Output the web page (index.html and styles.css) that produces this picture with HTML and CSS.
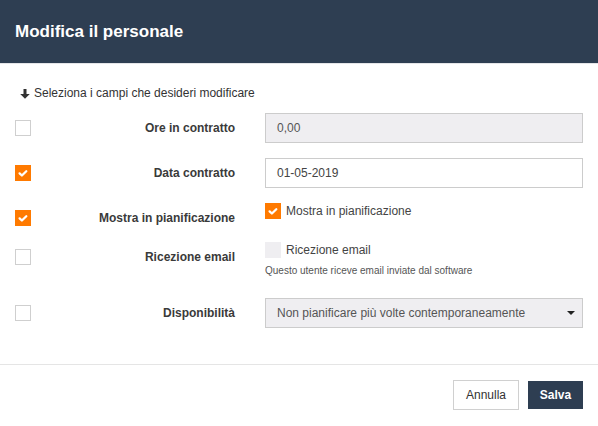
FILE: index.html
```html
<!DOCTYPE html>
<html lang="it">
<head>
<meta charset="utf-8">
<title>Modifica il personale</title>
<link rel="stylesheet" href="styles.css">
</head>
<body>
<div class="modal">
  <header class="modal-header">
    <h1 class="modal-title">Modifica il personale</h1>
  </header>
  <main class="modal-body">
    <p class="hint">
      <svg class="hint-arrow" viewBox="0 0 10 10" width="10" height="10"><path d="M3.5 0h3v5h3.3L5 9.8 0.2 5h3.3z" fill="#333"/></svg>
      <span>Seleziona i campi che desideri modificare</span>
    </p>

    <div class="row row-1">
      <div class="cell-check"><span class="cb"></span></div>
      <div class="cell-label">Ore in contratto</div>
      <div class="cell-field"><div class="input input-disabled">0,00</div></div>
    </div>

    <div class="row row-2">
      <div class="cell-check"><span class="cb cb-on"><svg viewBox="0 0 16 16" width="16" height="16"><path d="M4.6 8.4l2.3 2.1L11.3 6.2" fill="none" stroke="#fff" stroke-width="2.3" stroke-linecap="round" stroke-linejoin="round"/></svg></span></div>
      <div class="cell-label">Data contratto</div>
      <div class="cell-field"><div class="input">01-05-2019</div></div>
    </div>

    <div class="row row-3">
      <div class="cell-check"><span class="cb cb-on"><svg viewBox="0 0 16 16" width="16" height="16"><path d="M4.6 8.4l2.3 2.1L11.3 6.2" fill="none" stroke="#fff" stroke-width="2.3" stroke-linecap="round" stroke-linejoin="round"/></svg></span></div>
      <div class="cell-label">Mostra in pianificazione</div>
      <div class="cell-field">
        <div class="check-line"><span class="cb cb-on"><svg viewBox="0 0 16 16" width="16" height="16"><path d="M4.6 8.4l2.3 2.1L11.3 6.2" fill="none" stroke="#fff" stroke-width="2.3" stroke-linecap="round" stroke-linejoin="round"/></svg></span><span class="check-text">Mostra in pianificazione</span></div>
      </div>
    </div>

    <div class="row row-4">
      <div class="cell-check"><span class="cb"></span></div>
      <div class="cell-label">Ricezione email</div>
      <div class="cell-field">
        <div class="check-line"><span class="cb cb-disabled"></span><span class="check-text">Ricezione email</span></div>
        <div class="help">Questo utente riceve email inviate dal software</div>
      </div>
    </div>

    <div class="row row-5">
      <div class="cell-check"><span class="cb"></span></div>
      <div class="cell-label">Disponibilità</div>
      <div class="cell-field">
        <div class="input input-disabled select">
          <span>Non pianificare più volte contemporaneamente</span>
          <span class="caret"></span>
        </div>
      </div>
    </div>
  </main>
  <footer class="modal-footer">
    <button class="btn btn-default" type="button">Annulla</button>
    <button class="btn btn-primary" type="button">Salva</button>
  </footer>
</div>
</body>
</html>
```

FILE: styles.css
```css
* { box-sizing: border-box; }
html, body { margin: 0; padding: 0; background: #fff; }
body {
  font-family: "Liberation Sans", Arial, sans-serif;
  font-size: 12px;
  color: #333;
}
.modal { width: 598px; }
.modal-header {
  height: 63px;
  background: #2e3e52;
  display: flex;
  align-items: center;
  padding-left: 15px;
  border-bottom: 1px solid #e4e5e8;
  box-sizing: content-box;
}
.modal-title {
  margin: 0;
  font-size: 17px;
  font-weight: bold;
  color: #fff;
  line-height: 19px;
}
.modal-body { padding: 22px 15px 36px; }
.hint {
  margin: 0 0 13px;
  padding-left: 5px;
  line-height: 14px;
  display: flex;
  align-items: center;
  gap: 4px;
}
.hint-arrow { display: block; margin-top: 1px; }
.row {
  display: grid;
  grid-template-columns: 16px 1fr 318px;
  align-items: start;
}
.row-1, .row-2 { margin-bottom: 15px; }
.row-3 { margin-bottom: 9px; }
.row-4 { margin-bottom: 20px; }
.cell-check { height: 30px; display: flex; align-items: center; }
.cell-label {
  height: 30px;
  display: flex;
  align-items: center;
  justify-content: flex-end;
  padding-right: 30px;
  font-weight: bold;
  color: #3a3a3a;
}
.cb {
  width: 16px;
  height: 16px;
  border: 1px solid #cfcfcf;
  background: #fff;
  display: block;
  flex: none;
}
.cb svg { display: block; margin: -1px; }
.cb-on { background: #ff7a00; border-color: #ff7a00; }
.cb-disabled { background: #efeef1; border-color: #efeef1; }
.input {
  height: 30px;
  border: 1px solid #cccccc;
  background: #fff;
  padding: 0 11px;
  display: flex;
  align-items: center;
  color: #444;
}
.input-disabled { background: #efeef1; color: #555; }
.select { justify-content: space-between; padding-right: 7px; }
.caret {
  width: 0;
  height: 0;
  border-left: 4px solid transparent;
  border-right: 4px solid transparent;
  border-top: 4px solid #222;
}
.check-line { display: flex; align-items: center; gap: 5px; height: 16px; }
.check-text { color: #444; }
.help {
  margin-top: 6px;
  font-size: 10px;
  line-height: 14px;
  color: #555;
}
.modal-footer {
  border-top: 1px solid #e5e5e5;
  padding: 15px 15px 15px;
  display: flex;
  justify-content: flex-end;
  align-items: center;
  gap: 9px;
}
.btn {
  font-family: "Liberation Sans", Arial, sans-serif;
  font-size: 12px;
  margin: 0;
  cursor: pointer;
}
.btn-default {
  width: 66px;
  height: 30px;
  border: 1px solid #d0d0d0;
  background: #fff;
  color: #333;
}
.btn-primary {
  width: 55px;
  height: 28px;
  border: none;
  background: #2e3e52;
  color: #fff;
  font-weight: bold;
}
```
